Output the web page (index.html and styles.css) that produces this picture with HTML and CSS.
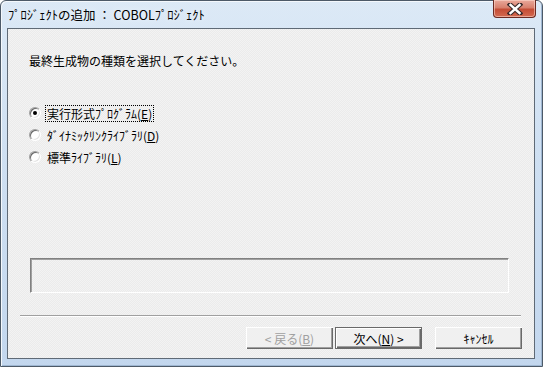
FILE: index.html
```html
<!DOCTYPE html>
<html lang="ja">
<head>
  <meta charset="UTF-8" />
  <title>ﾌﾟﾛｼﾞｪｸﾄの追加</title>
  <link rel="stylesheet" href="styles.css">
</head>
<body>

  <div class="window">
    <div class="titlebar">
      <span class="title">ﾌﾟﾛｼﾞｪｸﾄの追加 ： COBOLﾌﾟﾛｼﾞｪｸﾄ</span>
      <button class="close" aria-label="閉じる">
        <svg width="16" height="12" viewBox="0 0 16 12">
          <path d="M3 1.5 L13 10.5 M13 1.5 L3 10.5" stroke="#3a2a2a" stroke-width="4.6" stroke-linecap="square"/>
          <path d="M3.5 2 L12.5 10 M12.5 2 L3.5 10" stroke="#ffffff" stroke-width="2.4" stroke-linecap="square"/>
        </svg>
      </button>
    </div>

    <div class="client">
      <p class="prompt">最終生成物の種類を選択してください。</p>

      <div class="choices">
        <label class="choice">
          <span class="radio checked"></span>
          <span class="caption focus">実行形式ﾌﾟﾛｸﾞﾗﾑ(<u>E</u>)</span>
        </label>
        <label class="choice">
          <span class="radio"></span>
          <span class="caption">ﾀﾞｲﾅﾐｯｸﾘﾝｸﾗｲﾌﾞﾗﾘ(<u>D</u>)</span>
        </label>
        <label class="choice">
          <span class="radio"></span>
          <span class="caption">標準ﾗｲﾌﾞﾗﾘ(<u>L</u>)</span>
        </label>
      </div>

      <div class="infobox"></div>

      <div class="separator"></div>

      <div class="buttons">
        <button class="btn disabled">&lt; 戻る(<u>B</u>)</button>
        <button class="btn default">次へ(<u>N</u>) &gt;</button>
        <button class="btn cancel">ｷｬﾝｾﾙ</button>
      </div>
    </div>
  </div>

</body>
</html>
```

FILE: styles.css
```css
body {
  margin: 0;
  font-family: "Noto Sans CJK JP", "DejaVu Sans", sans-serif;
  font-size: 12px;
  color: #000;
  overflow: hidden;
}

.window {
  width: 543px;
  height: 367px;
  box-sizing: border-box;
  display: flex;
  flex-direction: column;
  border: 1px solid #4d5a68;
  border-radius: 6px 6px 0 0;
  background: linear-gradient(180deg, #dce9f6 0%, #cfe0f2 40%, #c3d7ee 100%);
  box-shadow: inset 1px 1px 0 #f4f8fc, inset -1px -1px 0 #9fb7d2;
}

.titlebar {
  height: 27px;
  display: flex;
  align-items: flex-start;
  justify-content: space-between;
  padding-left: 7px;
}

.title {
  margin-top: 6px;
  line-height: 16px;
  font-size: 12.5px;
  color: #000;
  text-shadow: 0 0 6px #f2f7fc;
  white-space: nowrap;
}

.close {
  width: 43px;
  height: 18px;
  margin: -1px 6px 0 0;
  padding: 0;
  border: 1px solid #6b2a22;
  border-top: none;
  border-radius: 0 0 4px 4px;
  background: linear-gradient(180deg, #e9a99b 0%, #d8806d 45%, #c44d36 55%, #d46a50 100%);
  box-shadow: inset 0 0 0 1px rgba(255, 220, 210, 0.55);
  display: flex;
  align-items: center;
  justify-content: center;
}

.client {
  flex: 1;
  margin: 0 7px 7px 6px;
  border: 1px solid #5f6a76;
  background-color: #f0f0f0;
  background-image: repeating-conic-gradient(#f3f3f3 0 25%, #ebebeb 0 50%);
  background-size: 2px 2px;
  display: flex;
  flex-direction: column;
}

.prompt {
  margin: 24px 0 0 21px;
  line-height: 16px;
}

.choices {
  margin: 33px 0 0 21px;
  display: flex;
  flex-direction: column;
}

.choice {
  height: 22px;
  display: flex;
  align-items: center;
}

.radio {
  width: 10px;
  height: 10px;
  border-radius: 50%;
  border: 1px solid;
  border-color: #a0a0a0 #ffffff #ffffff #a0a0a0;
  box-shadow: inset 1px 1px 0 #696969, inset -1px -1px 0 #e3e3e3;
  background: #fff;
  position: relative;
  flex: none;
}

.radio.checked::after {
  content: "";
  position: absolute;
  left: 3px;
  top: 3px;
  width: 4px;
  height: 4px;
  border-radius: 50%;
  background: #000;
}

.caption {
  margin-left: 4px;
  padding: 0 1px;
  line-height: 15px;
  border: 1px solid transparent;
  white-space: nowrap;
}

.caption.focus {
  border: 1px dotted #000;
}

.infobox {
  margin: 90px 0 0 22px;
  width: 477px;
  height: 33px;
  border: 1px solid;
  border-color: #808080 #ffffff #ffffff #808080;
  box-shadow: inset 1px 1px 0 #a0a0a0;
}

.separator {
  margin: 22px 0 0 12px;
  width: 501px;
  height: 1px;
  background: #a0a0a0;
  border-bottom: 1px solid #ffffff;
}

.buttons {
  display: flex;
  justify-content: flex-end;
  margin: 10px 12px 0 0;
}

.btn {
  width: 87px;
  height: 22px;
  font-family: inherit;
  font-size: 12px;
  padding: 0;
  background: #f0f0f0;
  border: none;
  color: #000;
  box-shadow: inset 1px 1px 0 #ffffff, inset -1px -1px 0 #696969, inset -2px -2px 0 #a0a0a0;
}

.btn.disabled {
  color: #a0a0a0;
}

.btn.default {
  margin-left: 2px;
  box-shadow: inset 0 0 0 1px #696969, inset 2px 2px 0 #ffffff, inset -2px -2px 0 #696969, inset -3px -3px 0 #a0a0a0;
}

.btn.cancel {
  margin-left: 13px;
}
```
